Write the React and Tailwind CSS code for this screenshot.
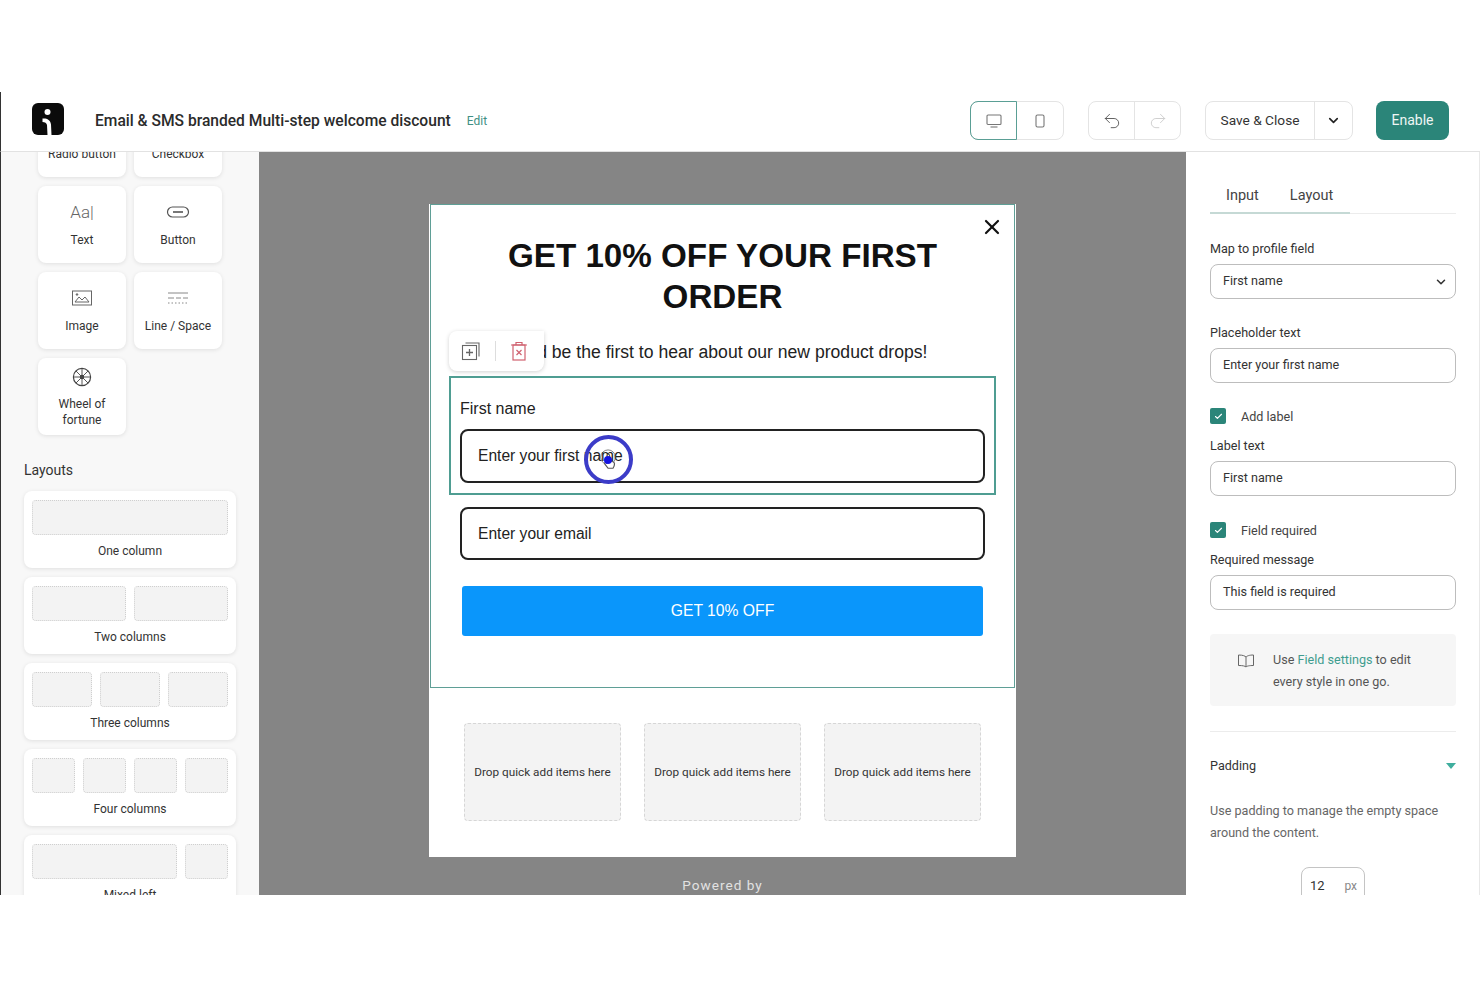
import React from "react";
import { X, ChevronDown, Check, Undo2, Redo2 } from "lucide-react";

const Blocks = [
  { label: "Text", icon: <span className="font-['Roboto',sans-serif] text-[17px] leading-[20px] text-[#666] font-light">Aa|</span> },
  {
    label: "Button",
    icon: (
      <svg width="24" height="14" viewBox="0 0 24 14" fill="none" stroke="#555" strokeWidth="1.2">
        <rect x="1.5" y="2" width="21" height="10" rx="5" />
        <path d="M7 7h10" strokeWidth="1.6" />
      </svg>
    ),
  },
  {
    label: "Image",
    icon: (
      <svg width="22" height="18" viewBox="0 0 22 18" fill="none" stroke="#666" strokeWidth="1">
        <rect x="1.5" y="2" width="19" height="14" />
        <path d="M4 13l4-5 3 3 3-3 4 5z" />
        <circle cx="6" cy="5.5" r="0.8" fill="#666" />
      </svg>
    ),
  },
  {
    label: "Line / Space",
    icon: (
      <svg width="22" height="14" viewBox="0 0 22 14" fill="none" stroke="#888" strokeWidth="1">
        <path d="M1 2h20" />
        <path d="M1 7h6M9 7h5M16 7h5" />
        <path d="M1 12h20" strokeDasharray="1.5 2" />
      </svg>
    ),
  },
];

function Wheel() {
  return (
    <svg width="20" height="20" viewBox="0 0 20 20" fill="none" stroke="#444" strokeWidth="1.2">
      <circle cx="10" cy="10" r="8.6" />
      <circle cx="10" cy="10" r="1.6" />
      <path d="M10 1.500v17M1.500 10h17M4 4l12 12M16 4L4 16" strokeWidth="0.9" />
    </svg>
  );
}

function Card({ label, icon }) {
  return (
    <div className="h-[77px] w-[88px] rounded-lg bg-white shadow-[0_1px_4px_rgba(0,0,0,0.1)] flex flex-col items-center">
      <div className="h-[20px] mt-[16px] flex items-center justify-center">{icon}</div>
      <div className="mt-[8px] text-[12px] leading-[20px] text-[#333]">{label}</div>
    </div>
  );
}

function Slot({ className }) {
  return <div className={"h-[35px] rounded border border-dotted border-[#cfcfcf] bg-[#f3f3f3] " + className} />;
}

function LayoutCard({ label, children }) {
  return (
    <div className="h-[77px] w-[212px] shrink-0 rounded-lg bg-white shadow-[0_1px_4px_rgba(0,0,0,0.1)] px-[8px] pt-[9px]">
      <div className="flex gap-[8px]">{children}</div>
      <div className="mt-[9px] text-center text-[12px] leading-[15px] text-[#333]">{label}</div>
    </div>
  );
}

function Sidebar() {
  return (
    <aside className="w-[259px] shrink-0 h-full overflow-hidden bg-[#f8f8f8] border-l border-[#333]">
      <div className="-mt-[52px] -ml-px">
        <div className="grid grid-cols-[88px_88px] gap-x-[8px] gap-y-[9px] pl-[38px]">
          <Card label="Radio button" icon={null} />
          <Card label="Checkbox" icon={null} />
          {Blocks.map((b) => (
            <Card key={b.label} label={b.label} icon={b.icon} />
          ))}
          <div className="h-[77px] w-[88px] rounded-lg bg-white shadow-[0_1px_4px_rgba(0,0,0,0.1)] flex flex-col items-center pt-[9px]">
            <Wheel />
            <div className="mt-[9px] text-center text-[12px] leading-[16px] text-[#333]">
              Wheel of
              <br />
              fortune
            </div>
          </div>
        </div>
        <div className="mt-[25px] ml-[24px] text-[14px] leading-[20px] text-[#333]">Layouts</div>
        <div className="mt-[11px] ml-[24px] flex flex-col gap-[9px]">
          <LayoutCard label="One column">
            <Slot className="flex-1" />
          </LayoutCard>
          <LayoutCard label="Two columns">
            <Slot className="flex-1" />
            <Slot className="flex-1" />
          </LayoutCard>
          <LayoutCard label="Three columns">
            <Slot className="flex-1" />
            <Slot className="flex-1" />
            <Slot className="flex-1" />
          </LayoutCard>
          <LayoutCard label="Four columns">
            <Slot className="flex-1" />
            <Slot className="flex-1" />
            <Slot className="flex-1" />
            <Slot className="flex-1" />
          </LayoutCard>
          <LayoutCard label="Mixed left">
            <Slot className="flex-1" />
            <Slot className="w-[43px]" />
          </LayoutCard>
        </div>
      </div>
    </aside>
  );
}

function Header() {
  return (
    <header className="h-[60px] shrink-0 flex items-center bg-white border-b border-[#e2e2e2] border-l border-l-[#333] pl-[31px] pr-[31px] pb-[2px]">
      <svg width="32" height="32" viewBox="0 0 32 32" className="mb-[3px]">
        <rect width="32" height="32" rx="6" fill="#0b0b0b" />
        <circle cx="15.500" cy="9" r="3" fill="#fff" />
        <path d="M10.500 15.500c4-.5 8 1 8.500 6L19.500 32H15.500L15 22c-.5-2-2-3-4.500-3z" fill="#fff" />
      </svg>
      <div className="ml-[31px] text-[15.6px] font-medium text-[#2b2b2b] leading-[20px]">Email &amp; SMS branded Multi-step welcome discount</div>
      <div className="ml-[16px] text-[12px] text-[#3f8f83]">Edit</div>

      <div className="ml-auto flex h-[39px] w-[94px] rounded-lg border border-[#e4e4e4]">
        <div className="w-[47px] -m-px h-[39px] rounded-l-lg border border-[#5a9f95] flex items-center justify-center">
          <svg width="16" height="14" viewBox="0 0 16 14" fill="none" stroke="#777" strokeWidth="1.1">
            <rect x="1" y="1" width="14" height="9.5" rx="1" />
            <path d="M4.500 13h7" />
          </svg>
        </div>
        <div className="flex-1 flex items-center justify-center">
          <svg width="10" height="14" viewBox="0 0 10 14" fill="none" stroke="#777" strokeWidth="1.1">
            <rect x="1" y="1" width="8" height="12" rx="1.500" />
          </svg>
        </div>
      </div>

      <div className="ml-[24px] flex h-[39px] w-[93px] rounded-lg border border-[#e4e4e4]">
        <div className="w-[46px] flex items-center justify-center border-r border-[#e4e4e4]">
          <Undo2 size={20} strokeWidth={1.1} color="#555" />
        </div>
        <div className="flex-1 flex items-center justify-center">
          <Redo2 size={20} strokeWidth={1.1} color="#ccc" />
        </div>
      </div>

      <div className="ml-[24px] flex h-[39px] w-[148px] rounded-lg border border-[#e4e4e4]">
        <div className="w-[109px] flex items-center justify-center border-r border-[#e4e4e4] text-[13.7px] text-[#333]">Save &amp; Close</div>
        <div className="flex-1 flex items-center justify-center">
          <ChevronDown size={15} strokeWidth={2.6} color="#222" />
        </div>
      </div>

      <div className="ml-[23px] h-[39px] w-[73px] rounded-lg bg-[#2b8579] text-[#eef6f4] text-[14px] flex items-center justify-center">Enable</div>
    </header>
  );
}

function Quick() {
  return (
    <div className="h-[98px] w-[157px] rounded border border-dashed border-[#d6d6d6] bg-[#f3f3f3] flex items-center justify-center pt-[2px] text-[11.75px] text-[#333]">
      Drop quick add items here
    </div>
  );
}

function Canvas() {
  return (
    <main className="flex-1 h-full overflow-hidden bg-[#858585] flex flex-col items-center pt-[52px]">
      <div className="w-[587px] shrink-0 bg-white font-['Liberation_Sans',Arial,sans-serif] relative">
        <div className="mx-px border border-[#5f9f96] pt-[30px] pb-[51px] h-[484px] relative">
          <X size={24} strokeWidth={2.2} color="#111" className="absolute right-[10px] top-[10px]" />
          <h1 className="text-center text-[33.2px] leading-[41px] font-bold text-[#111] px-[40px]">GET 10% OFF YOUR FIRST ORDER</h1>
          <p className="mt-[24px] text-center text-[17.6px] leading-[22px] text-[#222]">and be the first to hear about our new product drops!</p>

          <div className="absolute left-[18px] top-[126px] w-[95px] h-[40px] rounded-b-lg rounded-tl-lg bg-white shadow-[0_1px_4px_rgba(0,0,0,0.18)] flex items-center">
            <div className="w-[46px] flex justify-center pr-[3px]">
              <svg width="20" height="20" viewBox="0 0 20 20" fill="none" stroke="#666" strokeWidth="1.1">
                <rect x="1.500" y="4.500" width="14" height="14" />
                <path d="M4.500 2h13.500v13.500" />
                <path d="M8.500 8v7M5 11.500h7" strokeWidth="1.3" />
              </svg>
            </div>
            <div className="w-px h-[20px] bg-[#ddd]" />
            <div className="flex-1 flex justify-center pr-[3px]">
              <svg width="18" height="20" viewBox="0 0 18 20" fill="none" stroke="#d0616f" strokeWidth="1.2">
                <path d="M1 4h16M6 4V1.500h6V4" />
                <rect x="3" y="4" width="12" height="15" />
                <path d="M6.500 9l5 5M11.500 9l-5 5" />
              </svg>
            </div>
          </div>

          <div className="mx-[18px] mt-[13px] h-[119px] border-2 border-[#4f9d92] px-[9px] pt-[21px]">
            <div className="text-[16px] leading-[20px] text-[#222]">First name</div>
            <div className="mt-[10px] h-[54px] rounded-lg border-2 border-[#222] flex items-center pl-[16px] text-[15.6px] text-[#222]">Enter your first name</div>
          </div>
          <div className="mx-[29px] mt-[12px] h-[53px] rounded-lg border-2 border-[#222] flex items-center pl-[16px] text-[15.6px] text-[#222]">Enter your email</div>
          <div className="ml-[31px] mr-[31px] mt-[26px] h-[50px] rounded-[3px] bg-[#0a96fb] flex items-center justify-center text-[15.7px] text-white">GET 10% OFF</div>

          <div className="absolute left-[153px] top-[230px] w-[49px] h-[49px] rounded-full border-[4px] border-[#3c3cc8] flex items-center justify-center">
            <svg width="22" height="22" viewBox="0 0 24 24" fill="none" stroke="#555" strokeWidth="1.3">
              <circle cx="11" cy="9" r="8" strokeWidth="0.8" />
              <path d="M10 11V7a1.300 1.300 0 012.600 0v6l3 .6c1.400.3 2.400 1.200 2.400 2.600 0 1.600-.6 3.400-1.600 4.800H11l-3.500-4.600c-.7-1 .4-2.200 1.400-1.400l1.100 1" fill="#fff" />
            </svg>
            <div className="absolute left-[16px] top-[17px] w-[8px] h-[8px] rounded-full bg-[#1414e0]" />
          </div>
        </div>
        <div className="h-[169px] px-[35px] pt-[35px] flex gap-[23px] font-['Roboto',sans-serif]">
          <Quick />
          <Quick />
          <Quick />
        </div>
      </div>
      <div className="mt-[19px] text-[13.6px] leading-[18px] tracking-[1px] text-[#e2e2e2]">Powered by</div>
    </main>
  );
}

function Field({ label, value, select }) {
  return (
    <div>
      <div className="text-[12.6px] leading-[16px] text-[#333]">{label}</div>
      <div className="mt-[7px] h-[35px] rounded-lg border border-[#bdbdbd] flex items-center justify-between pl-[12px] pr-[7px] text-[12.6px] text-[#333]">
        {value}
        {select && <ChevronDown size={14} strokeWidth={2.6} color="#333" />}
      </div>
    </div>
  );
}

function Checkbox({ label }) {
  return (
    <div className="flex items-center h-[16px]">
      <div className="w-[16px] h-[16px] rounded-[2px] bg-[#2b8579] flex items-center justify-center">
        <Check size={9} strokeWidth={3} color="#fff" />
      </div>
      <span className="ml-[15px] pt-[2px] text-[12.6px] text-[#444]">{label}</span>
    </div>
  );
}

function RightPanel() {
  return (
    <aside className="w-[294px] shrink-0 h-full overflow-hidden bg-white border-r border-[#e8e8e8] pl-[24px] pr-[23px] pt-[33px]">
      <div className="relative h-[29px] border-b border-[#ececec] flex pl-[16px] pt-px gap-[31px] text-[14.5px] leading-[20px] text-[#444]">
        <span>Input</span>
        <span>Layout</span>
        <div className="absolute left-0 -bottom-px w-[140px] h-[2px] bg-[#c5d9d5]" />
      </div>
      <div className="mt-[27px]">
        <Field label="Map to profile field" value="First name" select />
      </div>
      <div className="mt-[26px]">
        <Field label="Placeholder text" value="Enter your first name" />
      </div>
      <div className="mt-[25px]">
        <Checkbox label="Add label" />
      </div>
      <div className="mt-[14px]">
        <Field label="Label text" value="First name" />
      </div>
      <div className="mt-[26px]">
        <Checkbox label="Field required" />
      </div>
      <div className="mt-[14px]">
        <Field label="Required message" value="This field is required" />
      </div>
      <div className="mt-[24px] h-[72px] rounded bg-[#f6f6f6] flex pl-[27px] pt-[15px]">
        <svg width="18" height="14" viewBox="0 0 18 14" fill="none" stroke="#666" strokeWidth="1" className="mt-[5px]">
          <path d="M9 3c-1-1-3-2-7.500-2v10.500c4.500 0 6.500.5 7.500 1.500 1-1 3-1.500 7.500-1.500V1C12 1 10 2 9 3zM9 3v10" />
        </svg>
        <div className="ml-[18px] text-[12.6px] leading-[21.5px] text-[#555]">
          Use <span className="text-[#3f9d8f]">Field settings</span> to edit
          <br />
          every style in one go.
        </div>
      </div>
      <div className="mt-[25px] h-px bg-[#ececec]" />
      <div className="mt-[26px] flex items-center justify-between h-[16px]">
        <span className="text-[12.6px] text-[#333]">Padding</span>
        <div className="w-0 h-0 border-l-[5px] border-r-[5px] border-t-[6px] border-l-transparent border-r-transparent border-t-[#3fae9e]" />
      </div>
      <div className="mt-[26px] text-[12.6px] leading-[21.5px] text-[#666]">
        Use padding to manage the empty space
        <br />
        around the content.
      </div>
      <div className="mt-[24px] mx-auto w-[64px] h-[44px] rounded-lg border border-[#c4c4c4] flex justify-between pl-[8px] pr-[7px] pt-[10px] text-[13px] leading-[16px]">
        <span className="text-[#333]">12</span>
        <span className="text-[#888] text-[12px]">px</span>
      </div>
    </aside>
  );
}

export default function App() {
  return (
    <div className="h-[987px] w-[1480px] bg-white overflow-hidden font-['Roboto',sans-serif] antialiased">
      <div className="h-[92px]" />
      <div className="h-[803px] flex flex-col">
        <Header />
        <div className="flex-1 min-h-0 flex">
          <Sidebar />
          <Canvas />
          <RightPanel />
        </div>
      </div>
    </div>
  );
}
